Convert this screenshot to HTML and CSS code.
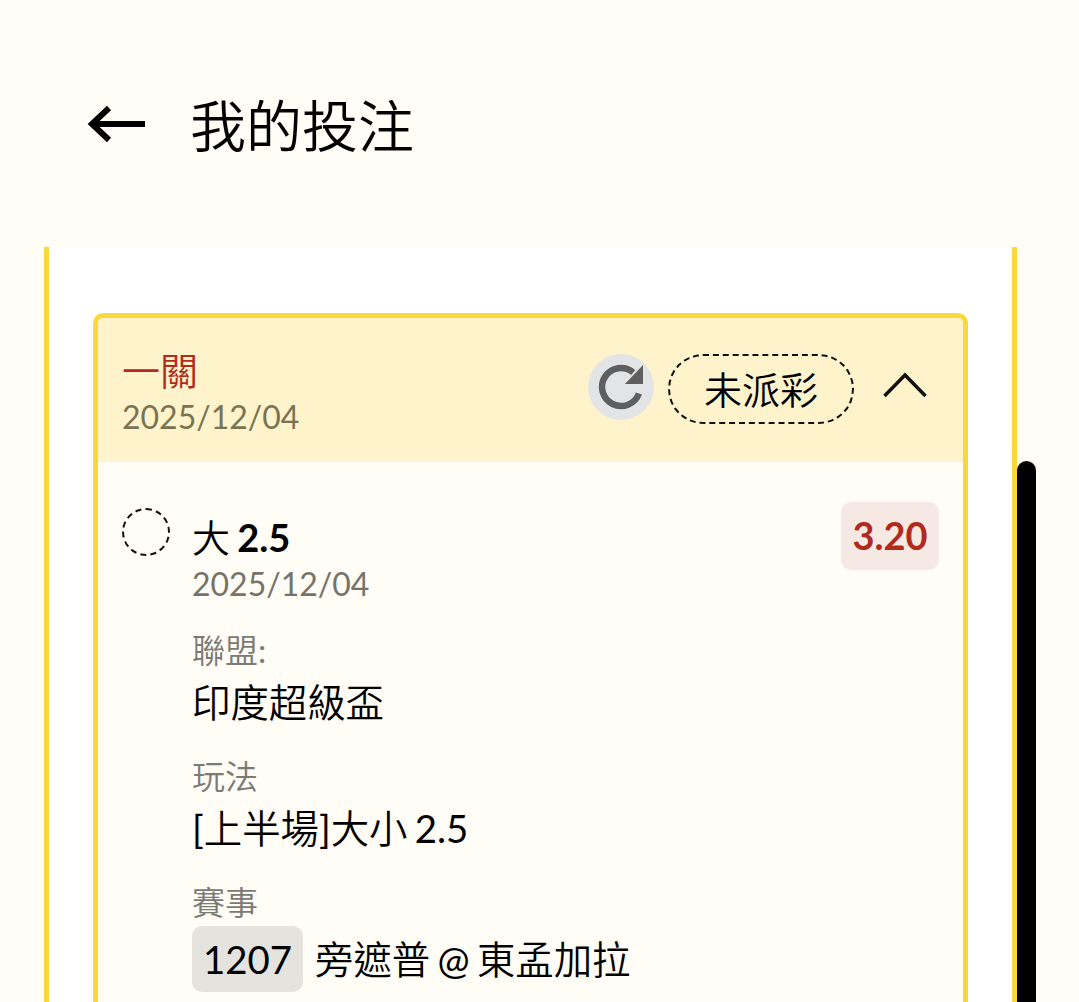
FILE: index.html
```html
<!DOCTYPE html>
<html lang="zh-Hant">
<head>
<meta charset="utf-8">
<title>我的投注</title>
<link rel="stylesheet" href="styles.css">
</head>
<body>
<header class="topbar">
  <svg class="back" width="60" height="42" viewBox="0 0 60 42"><path d="M58 21H6M22 5 5 21l17 16" fill="none" stroke="#000" stroke-width="6"/></svg>
  <h1>我的投注</h1>
</header>

<main class="panel">
  <section class="bet">
    <div class="bet-head">
      <div>
        <div class="bet-type">一關</div>
        <div class="date date-head">2025/12/04</div>
      </div>
      <div class="head-right">
        <span class="refresh">
          <svg width="50" height="50" viewBox="0 0 50 50"><path d="M42.900 31.500A19 19 0 1 1 37.200 10.400" fill="none" stroke="#5f5f5f" stroke-width="6.500"/><path d="M47 3V22H29z" fill="#5f5f5f"/></svg>
        </span>
        <span class="status">未派彩</span>
        <svg class="chevron" width="44" height="28" viewBox="0 0 44 28"><path d="M1.500 25 22 4l20.500 21" fill="none" stroke="#111" stroke-width="3.500"/></svg>
      </div>
    </div>

    <div class="bet-body">
      <div class="leg-top">
        <span class="dot"></span>
        <div class="leg-title">
          <div class="pick">大 <b>2.5</b></div>
          <div class="date">2025/12/04</div>
        </div>
        <span class="odds">3.20</span>
      </div>
      <div class="field">
        <div class="label">聯盟:</div>
        <div class="value">印度超級盃</div>
      </div>
      <div class="field">
        <div class="label">玩法</div>
        <div class="value">[上半場]大小 2.5</div>
      </div>
      <div class="field">
        <div class="label">賽事</div>
        <div class="value match"><span class="code">1207</span>旁遮普 @ 東孟加拉</div>
      </div>
    </div>
  </section>
</main>

<div class="scrollbar"></div>
</body>
</html>
```

FILE: styles.css
```css
html, body {
  margin: 0;
  height: 1002px;
  overflow: hidden;
}

body {
  position: relative;
  background-color: #fffdf5;
  color: #000;
  font-family: Lato, "Noto Sans CJK TC DemiLight", "Noto Sans CJK TC", sans-serif;
}

.topbar {
  height: 247px;
  display: flex;
  align-items: center;
  padding-left: 87px;
  box-sizing: border-box;
}

.back {
  margin-right: 43px;
}

.topbar h1 {
  margin: 4px 0 0;
  font-size: 56px;
  font-weight: 400;
  line-height: 1;
}

.panel {
  margin-left: 44px;
  width: 973px;
  height: 755px;
  box-sizing: border-box;
  padding: 66px 44px 0;
  background-color: #fff;
  border-left: 5px solid #fad73c;
  border-right: 5px solid #fad73c;
}

.bet {
  border: 5px solid #fad73c;
  border-bottom: none;
  border-radius: 10px 10px 0 0;
  height: 700px;
  background-color: #fffdf5;
}

.bet-head {
  height: 144px;
  box-sizing: border-box;
  padding: 32px 36px 0 24px;
  display: flex;
  justify-content: space-between;
  background-color: #fff3cc;
  border-radius: 5px 5px 0 0;
}

.bet-type {
  color: #b12a1e;
  font-size: 38px;
  line-height: 40px;
}

.date {
  color: #75736a;
  font-size: 32px;
  line-height: 40px;
}

.date-head {
  color: #7a7353;
  margin-top: 7px;
}

.head-right {
  display: flex;
  align-items: flex-start;
  margin-top: 4px;
}

.refresh {
  width: 66px;
  height: 66px;
  border-radius: 50%;
  background-color: #e3e4e6;
  display: flex;
  align-items: center;
  justify-content: center;
}

.status {
  width: 186px;
  height: 70px;
  box-sizing: border-box;
  margin-left: 14px;
  border: 2px dashed #111;
  border-radius: 35px;
  font-size: 38px;
  line-height: 66px;
  text-align: center;
}

.chevron {
  margin: 17px 0 0 29px;
}

.bet-body {
  padding: 40px 24px 0 24px;
}

.leg-top {
  display: flex;
  align-items: flex-start;
}

.dot {
  width: 48px;
  height: 48px;
  box-sizing: border-box;
  margin: 6px 22px 0 0;
  border: 2px dashed #111;
  border-radius: 50%;
}

.leg-title {
  flex: 1;
  padding-top: 9px;
}

.pick {
  font-size: 38px;
  line-height: 53px;
  word-spacing: -2.500px;
}

.pick b {
  font-weight: 700;
}

.odds {
  width: 98px;
  height: 68px;
  border-radius: 10px;
  background-color: #f6e9e3;
  color: #b12a1e;
  font-size: 38px;
  font-weight: 700;
  line-height: 66px;
  text-align: center;
}

.field {
  margin: 23px 0 0 70px;
}

.label {
  color: #7b7b76;
  font-size: 33px;
  line-height: 47px;
}

.value {
  font-size: 38.400px;
  line-height: 56px;
  word-spacing: -2.500px;
}

.match {
  display: flex;
  align-items: center;
}

.code {
  width: 111px;
  height: 66px;
  margin-right: 12px;
  border-radius: 10px;
  background-color: #e4e3de;
  line-height: 66px;
  text-align: center;
}

.scrollbar {
  position: absolute;
  left: 1017px;
  top: 461px;
  width: 19px;
  height: 560px;
  border-radius: 10px;
  background-color: #000;
}
```
